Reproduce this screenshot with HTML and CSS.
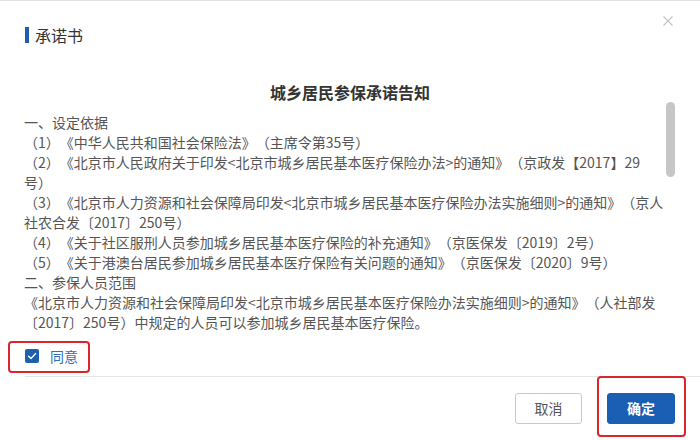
FILE: index.html
```html
<!DOCTYPE html>
<html lang="zh-CN">
<head>
<meta charset="utf-8">
<title>承诺书</title>
<link rel="stylesheet" href="styles.css">
</head>
<body>
<div class="dialog">
  <div class="header">
    <div class="title"><span class="title-bar"></span><span>承诺书</span></div>
    <button class="close" aria-label="关闭">
      <svg width="10" height="10" viewBox="0 0 10 10"><path d="M0.5 0.5 L9.5 9.5 M9.5 0.5 L0.5 9.5" stroke="#c4c4c4" stroke-width="1.1" fill="none"/></svg>
    </button>
  </div>
  <h2 class="heading">城乡居民参保承诺告知</h2>
  <div class="scroll">
    <div class="content">
      <p>一、设定依据</p>
      <p>（1）《中华人民共和国社会保险法》（主席令第35号）</p>
      <p>（2）《北京市人民政府关于印发&lt;北京市城乡居民基本医疗保险办法&gt;的通知》（京政发【2017】29<br>号）</p>
      <p>（3）《北京市人力资源和社会保障局印发&lt;北京市城乡居民基本医疗保险办法实施细则&gt;的通知》（京人<br>社农合发〔2017〕250号）</p>
      <p>（4）《关于社区服刑人员参加城乡居民基本医疗保险的补充通知》（京医保发〔2019〕2号）</p>
      <p>（5）《关于港澳台居民参加城乡居民基本医疗保险有关问题的通知》（京医保发〔2020〕9号）</p>
      <p>二、参保人员范围</p>
      <p>《北京市人力资源和社会保障局印发&lt;北京市城乡居民基本医疗保险办法实施细则&gt;的通知》（人社部发<br>〔2017〕250号）中规定的人员可以参加城乡居民基本医疗保险。</p>
    </div>
    <div class="scrollbar"><div class="thumb"></div></div>
  </div>
  <div class="agree-row">
    <label class="agree highlight-agree">
      <span class="checkbox">
        <svg width="10" height="8" viewBox="0 0 10 8"><path d="M1.5 4.2 L4 6.4 L8.6 1.6" stroke="#fff" stroke-width="1.4" fill="none" stroke-linecap="round" stroke-linejoin="round"/></svg>
      </span>
      <span class="agree-text">同意</span>
    </label>
  </div>
  <div class="footer">
    <button class="btn btn-cancel">取消</button>
    <span class="highlight-ok"><button class="btn btn-ok">确定</button></span>
  </div>
</div>
</body>
</html>
```
FILE: styles.css
```css
* { box-sizing: border-box; }
html, body { margin: 0; padding: 0; background: #fff; }
body {
  font-family: "Noto Sans CJK SC", "Liberation Sans", sans-serif;
  color: #555;
  text-spacing-trim: space-all;
}
.dialog {
  width: 700px;
  height: 440px;
  border-top: 1px solid #e2e2e2;
  background: #fff;
  overflow: hidden;
}
.header {
  display: flex;
  justify-content: space-between;
  align-items: flex-start;
  padding: 15px 27px 0 25px;
}
.title {
  margin-top: 11px;
  display: flex;
  align-items: center;
  gap: 6px;
  font-size: 16px;
  line-height: 16px;
  color: #333;
}
.title-bar {
  width: 4px;
  height: 16px;
  background: #1d5fae;
}
.close {
  border: 0;
  padding: 0;
  background: none;
  width: 10px;
  height: 10px;
  display: block;
}
.close svg { display: block; }
.heading {
  margin: 39px 0 0;
  text-align: center;
  font-size: 16px;
  line-height: 20px;
  font-weight: bold;
  color: #333;
}
.scroll {
  margin: 0 25px 0 24px;
  height: 233px;
  display: flex;
}
.content {
  flex: 1;
  min-width: 0;
  overflow: hidden;
  padding-top: 10px;
  font-size: 14px;
  line-height: 20px;
  color: #555;
}
.content p { margin: 0; white-space: nowrap; }
.scrollbar {
  width: 10px;
  display: flex;
  justify-content: flex-end;
}
.thumb {
  width: 9px;
  height: 75px;
  background: #c6c6c6;
  border-radius: 4.5px;
}
.agree-row {
  margin: 6px 0 0 25px;
  height: 20px;
}
.agree {
  position: relative;
  display: inline-flex;
  align-items: center;
  gap: 11px;
  height: 20px;
}
.highlight-agree::before {
  content: "";
  position: absolute;
  top: -5px;
  bottom: -7px;
  left: -17px;
  right: -12px;
  border: 2.5px solid #d8262b;
  border-radius: 4px;
}
.checkbox {
  width: 14px;
  height: 14px;
  border-radius: 2px;
  background: #1d5fb0;
  display: flex;
  align-items: center;
  justify-content: center;
}
.checkbox svg { display: block; }
.agree-text {
  font-size: 14px;
  line-height: 20px;
  color: #2f6fbc;
}
.footer {
  margin: 15px 0 0 25px;
  border-top: 1px solid #e6e6e6;
  padding: 16px 25px 0 0;
  display: flex;
  justify-content: flex-end;
  gap: 25px;
}
.btn {
  width: 67px;
  height: 31px;
  border-radius: 3px;
  font-family: "Noto Sans CJK SC", "Liberation Sans", sans-serif;
  font-size: 14px;
  line-height: 29px;
  padding: 0;
  display: block;
}
.btn-cancel {
  background: #fff;
  border: 1px solid #c9c9c9;
  color: #555;
}
.highlight-ok {
  position: relative;
  display: block;
}
.highlight-ok::before {
  content: "";
  position: absolute;
  top: -17px;
  bottom: -13px;
  left: -10px;
  right: -11px;
  border: 2.5px solid #d8262b;
  border-radius: 4px;
}
.btn-ok {
  width: 68px;
  background: #1a5fb4;
  border: 1px solid #1a5fb4;
  color: #fff;
  font-weight: bold;
}
```
